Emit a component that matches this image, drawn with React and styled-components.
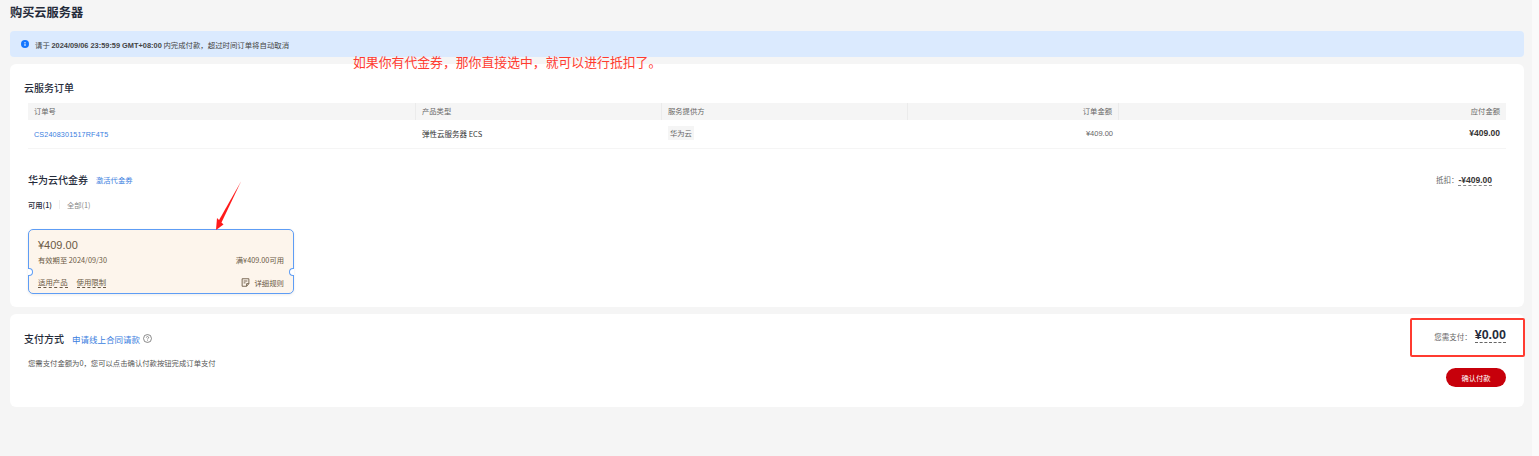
import React from 'react';
import styled, { createGlobalStyle } from 'styled-components';

const GlobalStyle = createGlobalStyle`
  html, body {
    margin: 0;
    padding: 0;
    background: #f5f5f5;
    overflow: hidden;
  }
  body {
    font-family: "Noto Sans CJK SC", "Liberation Sans", sans-serif;
    color: #333;
  }
`;

const columns = [
  { key: 'no', label: '订单号' },
  { key: 'type', label: '产品类型' },
  { key: 'vendor', label: '服务提供方' },
  { key: 'amount', label: '订单金额', right: true },
  { key: 'due', label: '应付金额', right: true },
];

const App = () => (
  <>
    <GlobalStyle />
    <Page>
      <Main>
        <Title>购买云服务器</Title>
        <Notice>
          <InfoIcon viewBox="0 0 16 16">
            <circle cx="8" cy="8" r="8" fill="#1476ff" />
            <rect x="7" y="7" width="2" height="5" fill="#fff" />
            <rect x="7" y="4" width="2" height="2" fill="#fff" />
          </InfoIcon>
          <span>
            请于 <b>2024/09/06 23:59:59 GMT+08:00</b> 内完成付款，超过时间订单将自动取消
          </span>
        </Notice>

        <OrderCard>
          <CardTitle>云服务订单</CardTitle>
          <Table>
            <HeadRow>
              {columns.map((c, i) => (
                <HeadCell key={c.key} $right={c.right} $divider={i < columns.length - 1}>
                  {c.label}
                </HeadCell>
              ))}
            </HeadRow>
            <BodyRow>
              <BodyCell><OrderLink>CS2408301517RF4T5</OrderLink></BodyCell>
              <BodyCell>弹性云服务器 ECS</BodyCell>
              <BodyCell><VendorTag>华为云</VendorTag></BodyCell>
              <BodyCell $right $muted>¥409.00</BodyCell>
              <BodyCell $right $strong>¥409.00</BodyCell>
            </BodyRow>
          </Table>

          <VoucherHead>
            <VoucherTitleGroup>
              <VoucherTitle>华为云代金券</VoucherTitle>
              <SmallLink>激活代金券</SmallLink>
            </VoucherTitleGroup>
            <Deduction>
              抵扣：<DashedAmount>-¥409.00</DashedAmount>
            </Deduction>
          </VoucherHead>

          <Tabs>
            <Tab $active>可用(1)</Tab>
            <TabDivider />
            <Tab>全部(1)</Tab>
          </Tabs>

          <Voucher>
            <VoucherPrice>¥409.00</VoucherPrice>
            <VoucherLine>
              <span>有效期至 2024/09/30</span>
              <span>满¥409.00可用</span>
            </VoucherLine>
            <VoucherFoot>
              <VoucherLinks>
                <DashedLabel>适用产品</DashedLabel>
                <DashedLabel>使用限制</DashedLabel>
              </VoucherLinks>
              <RuleLink>
                <svg width="9" height="9" viewBox="0 0 12 12" fill="none" stroke="#6b5a45" strokeWidth="1.2">
                  <path d="M1.5 1h9v6.5L7.5 11h-6z" />
                  <path d="M7.5 11V7.500h3M3.500 4h5M3.500 6.500h2.500" />
                </svg>
                详细规则
              </RuleLink>
            </VoucherFoot>
            <Notch $side="left" />
            <Notch $side="right" />
          </Voucher>
        </OrderCard>

        <PayCard>
          <PayLeft>
            <PayHead>
              <CardTitle>支付方式</CardTitle>
              <ContractLink>申请线上合同请款</ContractLink>
              <svg width="9" height="9" viewBox="0 0 12 12" fill="none" stroke="#666" strokeWidth="1">
                <circle cx="6" cy="6" r="5.300" />
                <path d="M4.500 4.700a1.500 1.500 0 1 1 2.300 1.300c-.5.300-.8.600-.8 1.100" />
                <path d="M6 8.500v1" />
              </svg>
            </PayHead>
            <PayHint>您需支付金额为0，您可以点击确认付款按钮完成订单支付</PayHint>
          </PayLeft>
          <PayRight>
            <PayTotal>
              <PayLabel>您需支付：</PayLabel>
              <PayAmount>¥0.00</PayAmount>
            </PayTotal>
            <ConfirmButton>确认付款</ConfirmButton>
          </PayRight>
        </PayCard>

        {/* screenshot annotations drawn on top of the page */}
        <Annotation>如果你有代金券，那你直接选中，就可以进行抵扣了。</Annotation>
        <ArrowMark viewBox="0 0 30 52">
          <path d="M27 1.500 L4.500 41 L7.500 42.500 Z" fill="#ff1a1a" />
          <path d="M2 50 L3 38 L9.500 44.500 Z" fill="#ff1a1a" />
        </ArrowMark>
        <HighlightBox />
      </Main>
      <ScrollTrack />
    </Page>
  </>
);

export default App;

const Page = styled.div`
  display: flex;
  width: 1539px;
  height: 456px;
  overflow: hidden;
`;

const Main = styled.main`
  position: relative;
  box-sizing: border-box;
  width: 1532px;
  padding: 0 8px 0 10px;
  display: flex;
  flex-direction: column;
`;

const ScrollTrack = styled.div`
  width: 7px;
  background: #fafafa;
`;

const Title = styled.h1`
  margin: 0;
  height: 31px;
  padding-top: 4px;
  box-sizing: border-box;
  font-size: 12.2px;
  line-height: 16px;
  font-weight: 700;
  color: #252b3a;
`;

const Notice = styled.div`
  height: 26px;
  border-radius: 4px;
  background: #dbeafe;
  display: flex;
  align-items: center;
  gap: 6px;
  padding-left: 11px;
  font-size: 7.4px;
  color: #444;

  b {
    font-family: "Liberation Sans", sans-serif;
    font-weight: 700;
  }
`;

const InfoIcon = styled.svg`
  width: 8px;
  height: 8px;
  flex: none;
`;

const Card = styled.section`
  background: #fff;
  border-radius: 6px;
  box-sizing: border-box;
`;

const OrderCard = styled(Card)`
  margin-top: 7px;
  height: 243px;
  padding: 16px 18px 0 18px;
`;

const CardTitle = styled.h2`
  margin: 0 0 0 -4px;
  padding-left: 0;
  height: 15px;
  font-size: 10px;
  line-height: 15px;
  font-weight: 500;
  color: #252b3a;
`;

const Table = styled.div`
  margin-top: 8px;
`;

const gridColumns = '388px 246px 246px 211px 387px';

const HeadRow = styled.div`
  display: grid;
  grid-template-columns: ${gridColumns};
  height: 17px;
  align-items: center;
  background: #f5f5f5;
`;

const HeadCell = styled.div`
  position: relative;
  height: 100%;
  box-sizing: border-box;
  padding: 0 6px;
  font-size: 7.3px;
  line-height: 16px;
  color: #666;
  text-align: ${(p) => (p.$right ? 'right' : 'left')};
  border-right: ${(p) => (p.$divider ? '1px solid #ebebeb' : 'none')};
`;

const BodyRow = styled.div`
  display: grid;
  grid-template-columns: ${gridColumns};
  box-sizing: border-box;
  height: 29px;
  padding-bottom: 2px;
  align-items: center;
  border-bottom: 1px solid #f5f5f5;
`;

const BodyCell = styled.div`
  padding: 0 6px;
  font-size: ${(p) => (p.$strong ? '8.5px' : '7.5px')};
  color: ${(p) => (p.$muted ? '#666' : '#333')};
  font-weight: ${(p) => (p.$strong ? 700 : 400)};
  text-align: ${(p) => (p.$right ? 'right' : 'left')};
  font-family: ${(p) =>
    p.$right ? '"Liberation Sans", sans-serif' : 'inherit'};
`;

const OrderLink = styled.a`
  color: #3a7ee0;
  font-family: "Liberation Sans", sans-serif;
  font-size: 7.2px;
  letter-spacing: 0.15px;
`;

const VendorTag = styled.span`
  display: inline-block;
  padding: 0 2px;
  font-size: 7.3px;
  line-height: 14px;
  background: #f5f5f5;
  color: #666;
`;

const VoucherHead = styled.div`
  margin-top: 23px;
  padding: 0 14px 0 0;
  display: flex;
  justify-content: space-between;
  align-items: center;
`;

const VoucherTitleGroup = styled.div`
  display: flex;
  align-items: center;
  gap: 8px;
`;

const VoucherTitle = styled.h3`
  margin: 0;
  font-size: 10px;
  line-height: 15px;
  font-weight: 500;
  color: #252b3a;
`;

const SmallLink = styled.a`
  font-size: 7.3px;
  color: #3a7ee0;
`;

const Deduction = styled.div`
  font-size: 7.5px;
  color: #666;
`;

const DashedAmount = styled.span`
  font-family: "Liberation Sans", sans-serif;
  font-size: 8.500px;
  font-weight: 700;
  color: #333;
  border-bottom: 1px dashed #888;
`;

const Tabs = styled.div`
  margin: 12px 0 0 0;
  display: flex;
  align-items: center;
  height: 11px;
`;

const Tab = styled.span`
  font-size: 7.3px;
  font-weight: ${(p) => (p.$active ? 500 : 400)};
  color: ${(p) => (p.$active ? '#252b3a' : '#888')};
`;

const TabDivider = styled.i`
  width: 1px;
  height: 9px;
  margin: 0 7px;
  background: #eee;
`;

const Voucher = styled.div`
  position: relative;
  margin-top: 19px;
  box-sizing: border-box;
  width: 266px;
  height: 65px;
  padding: 8px 9px 0;
  border: 1px solid #5e9df5;
  border-radius: 5px;
  background: #fdf5ec;
  color: #6b5a45;
  box-shadow: 0 1px 3px rgba(0, 0, 0, 0.08);
`;

const VoucherPrice = styled.div`
  font-family: "Liberation Sans", sans-serif;
  font-size: 11px;
  line-height: 15px;
`;

const VoucherLine = styled.div`
  margin-top: 2px;
  display: flex;
  justify-content: space-between;
  font-size: 7.3px;
  line-height: 11px;
`;

const VoucherFoot = styled.div`
  margin-top: 11px;
  display: flex;
  justify-content: space-between;
  align-items: center;
  font-size: 7.400px;
  line-height: 10px;
`;

const VoucherLinks = styled.div`
  display: flex;
  gap: 9px;
`;

const DashedLabel = styled.span`
  border-bottom: 1px dashed #6b5a45;
`;

const RuleLink = styled.span`
  display: flex;
  align-items: center;
  gap: 4px;
`;

// half circle cut into the ticket edge, covers the straight border behind it
const Notch = styled.i`
  position: absolute;
  top: 38px;
  ${(p) => p.$side}: -1px;
  width: 5px;
  height: 8px;
  box-sizing: border-box;
  border: 1px solid #5e9df5;
  border-${(p) => p.$side}: none;
  border-radius: ${(p) => (p.$side === 'left' ? '0 5px 5px 0' : '5px 0 0 5px')};
  background: #fff;
`;

const PayCard = styled(Card)`
  margin-top: 7px;
  height: 93px;
  padding: 16px 18px 0;
  display: flex;
  justify-content: space-between;
`;

const PayLeft = styled.div`
  padding-top: 1px;
`;

const PayHead = styled.div`
  display: flex;
  align-items: center;
  gap: 3px;
  margin-left: -4px;

  h2 {
    margin: 0 5px 0 0;
  }
`;

const ContractLink = styled.a`
  font-size: 8.500px;
  color: #3a7ee0;
`;

const PayHint = styled.p`
  margin: 11px 0 0 -4px;
  padding-left: 4px;
  font-size: 7.350px;
  line-height: 11px;
  color: #555;
`;

const PayRight = styled.div`
  display: flex;
  flex-direction: column;
  align-items: flex-end;
`;

const PayTotal = styled.div`
  display: flex;
  align-items: center;
  gap: 3px;
`;

const PayLabel = styled.span`
  font-size: 7.500px;
  color: #666;
`;

const PayAmount = styled.span`
  margin-top: -2px;
  font-family: "Liberation Sans", sans-serif;
  font-size: 12.500px;
  line-height: 14px;
  font-weight: 700;
  color: #252b3a;
  border-bottom: 1px dashed #666;
`;

const ConfirmButton = styled.button`
  margin-top: 25px;
  width: 60px;
  height: 19px;
  padding: 0;
  border: none;
  border-radius: 10px;
  background: #c7000b;
  color: #fff;
  font-family: inherit;
  font-size: 7.300px;
`;

const Annotation = styled.div`
  position: absolute;
  left: 353px;
  top: 53px;
  font-size: 12.850px;
  line-height: 17px;
  color: #ff3b30;
  white-space: nowrap;
`;

const ArrowMark = styled.svg`
  position: absolute;
  left: 214px;
  top: 180px;
  width: 30px;
  height: 52px;
`;

const HighlightBox = styled.div`
  position: absolute;
  left: 1410px;
  top: 318px;
  width: 115px;
  height: 39px;
  box-sizing: border-box;
  border: 2px solid #ff3b30;
  border-radius: 2px;
`;
